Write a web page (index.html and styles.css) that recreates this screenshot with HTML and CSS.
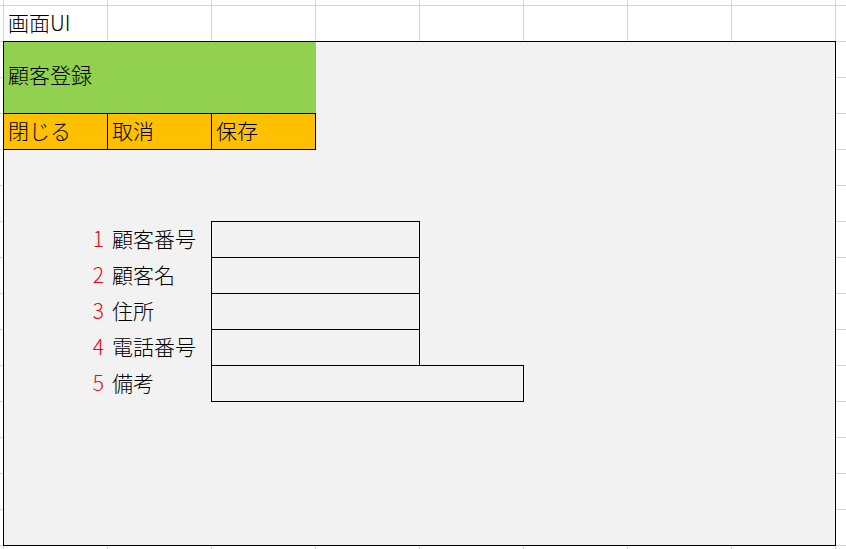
FILE: index.html
```html
<!DOCTYPE html>
<html lang="ja">
<head>
<meta charset="utf-8">
<title>画面UI</title>
<link rel="stylesheet" href="styles.css">
</head>
<body>
<div class="sheet">
  <div class="title-row">画面UI</div>
  <div class="frame">
    <div class="header">顧客登録</div>
    <div class="toolbar">
      <div class="tool">閉じる</div>
      <div class="tool">取消</div>
      <div class="tool">保存</div>
    </div>
    <div class="form">
      <div class="field">
        <div class="num">1</div>
        <div class="label">顧客番号</div>
        <div class="box"></div>
      </div>
      <div class="field">
        <div class="num">2</div>
        <div class="label">顧客名</div>
        <div class="box"></div>
      </div>
      <div class="field">
        <div class="num">3</div>
        <div class="label">住所</div>
        <div class="box"></div>
      </div>
      <div class="field">
        <div class="num">4</div>
        <div class="label">電話番号</div>
        <div class="box"></div>
      </div>
      <div class="field">
        <div class="num">5</div>
        <div class="label">備考</div>
        <div class="box box-wide"></div>
      </div>
    </div>
  </div>
</div>
</body>
</html>
```
FILE: styles.css
```css
html, body {
  margin: 0;
  padding: 0;
}
body {
  width: 846px;
  height: 549px;
  overflow: hidden;
  background-color: #ffffff;
  background-image:
    linear-gradient(to right, #d4d4d4 1px, transparent 1px),
    linear-gradient(to bottom, #d4d4d4 1px, transparent 1px);
  background-size: 104px 36px;
  background-position: 3px 5px;
  font-family: "Noto Sans CJK JP", "Noto Sans", sans-serif;
  font-weight: 300;
  font-size: 21px;
  color: #000;
}
.sheet {
  padding: 6px 0 0 3px;
}
.title-row {
  height: 35px;
  line-height: 33px;
  padding-left: 5px;
}
.frame {
  width: 831px;
  height: 503px;
  border: 1px solid #000;
  background: #f2f2f2;
}
.header {
  width: 308px;
  height: 71px;
  line-height: 65px;
  padding-left: 4px;
  background: #92d050;
}
.toolbar {
  display: flex;
  width: 312px;
  border-top: 1px solid #000;
  border-bottom: 1px solid #000;
  background: #ffc000;
}
.tool {
  width: 99px;
  height: 35px;
  line-height: 33px;
  padding-left: 4px;
  border-right: 1px solid #000;
}
.form {
  padding-top: 71px;
}
.field {
  display: flex;
  height: 37px;
  margin-top: -1px;
}
.field:first-child {
  margin-top: 0;
}
.num {
  width: 100px;
  padding-right: 3px;
  text-align: right;
  line-height: 35px;
  color: #ff0000;
}
.label {
  width: 99px;
  padding-left: 5px;
  line-height: 35px;
}
.box {
  width: 207px;
  height: 35px;
  border: 1px solid #000;
}
.box-wide {
  width: 311px;
}
```
